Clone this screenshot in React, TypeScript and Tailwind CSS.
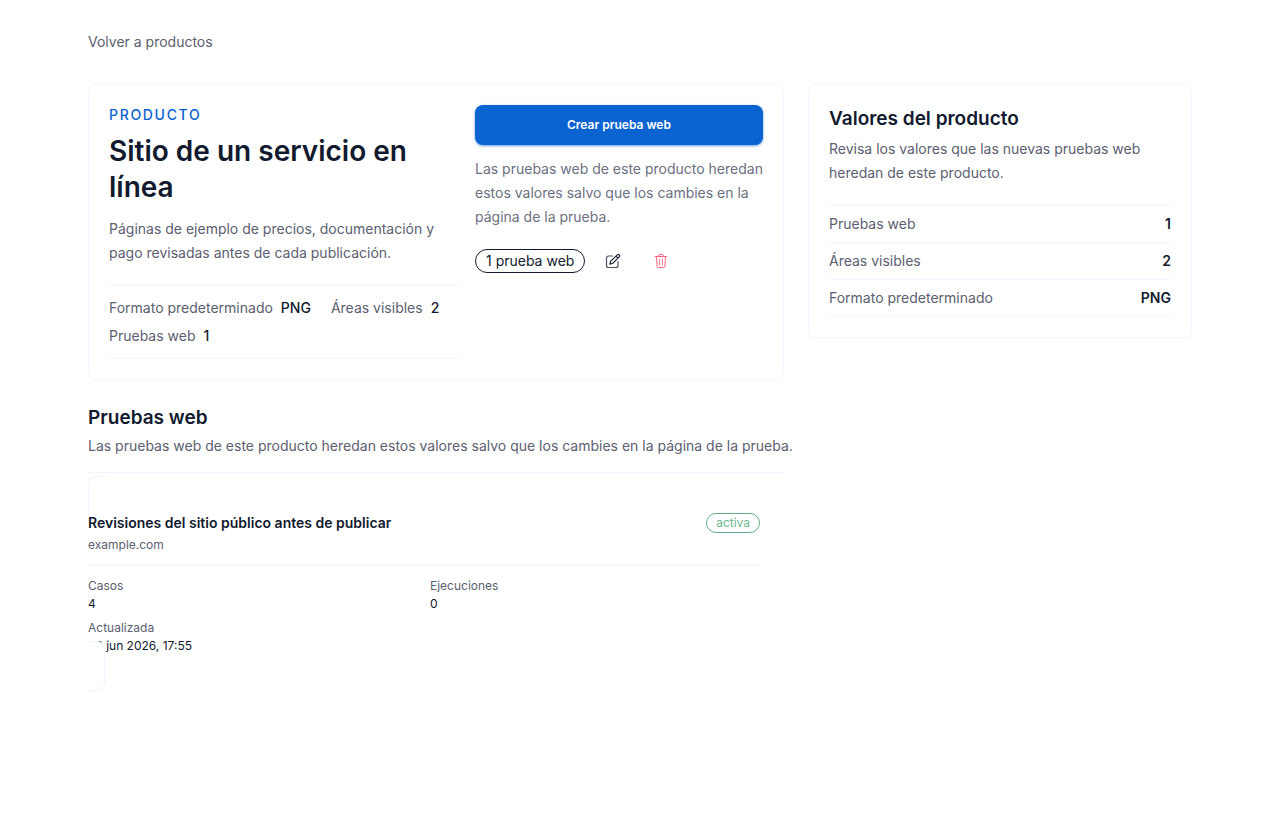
type Stat = {
    label: string;
    value: string;
};

const headerStats: Stat[] = [
    { label: "Formato predeterminado", value: "PNG" },
    { label: "Áreas visibles", value: "2" },
    { label: "Pruebas web", value: "1" },
];

const defaults: Stat[] = [
    { label: "Pruebas web", value: "1" },
    { label: "Áreas visibles", value: "2" },
    { label: "Formato predeterminado", value: "PNG" },
];

const testStats: Stat[] = [
    { label: "Casos", value: "4" },
    { label: "Ejecuciones", value: "0" },
    { label: "Actualizada", value: "26 jun 2026, 17:55" },
];

function EditIcon() {
    return (
        <svg viewBox="0 0 16 16" className="size-4" fill="none" stroke="currentColor" strokeLinecap="round" strokeLinejoin="round">
            <path opacity="0.75" strokeWidth="1.2" d="M7.5 3H3.5A2 2 0 0 0 1.5 5v7.5a2 2 0 0 0 2 2H11a2 2 0 0 0 2-2V8.5" />
            <path strokeWidth="1.1" d="M12.3 1.9a1.3 1.3 0 0 1 1.9 1.9L7.8 10.3l-3 .9.9-3zM11 3.2l1.9 1.9" />
        </svg>
    );
}

function TrashIcon() {
    return (
        <svg viewBox="0 0 16 16" className="size-4" fill="none" stroke="currentColor" strokeLinecap="round" strokeLinejoin="round">
            <path d="M2.3 3.5h11.4M5.2 3.5l.7-1.6a.8.8 0 0 1 .7-.4h2.8a.8.8 0 0 1 .7.4l.7 1.6M3.5 3.5l.6 9.6a1.5 1.5 0 0 0 1.5 1.4h4.8a1.5 1.5 0 0 0 1.5-1.4l.6-9.6" />
            <path opacity="0.8" d="M6.5 6v6M9.5 6v6" />
        </svg>
    );
}

function ProductHeader() {
    return (
        <section className="flex flex-col gap-4 rounded-lg border border-[#f1f5ff] p-5 md:flex-row">
            <div className="min-w-0 flex-1">
                <p className="text-sm font-medium uppercase tracking-[0.12em] text-[#0b63d1]">Producto</p>
                <h1 className="mt-2 text-[28px] font-semibold leading-9">Sitio de un servicio en línea</h1>
                <p className="mt-3 text-sm leading-6 text-[#5b6070]">
                    Páginas de ejemplo de precios, documentación y pago revisadas antes de cada publicación.
                </p>
                <dl className="mt-5 flex flex-wrap gap-x-5 gap-y-2 border-y border-[#f1f5ff] py-3 text-sm">
                    {headerStats.map((stat) => (
                        <div key={stat.label} className="flex gap-2">
                            <dt className="text-[#5b6070]">{stat.label}</dt>
                            <dd className="font-medium">{stat.value}</dd>
                        </div>
                    ))}
                </dl>
            </div>

            <div className="flex flex-col gap-3 md:w-72">
                <button className="h-10 rounded-lg bg-[#0b63d1] text-xs font-semibold text-white shadow-sm shadow-[#0b63d1]/50">
                    Crear prueba web
                </button>
                <p className="text-sm leading-6 text-[#6b7080]">
                    Las pruebas web de este producto heredan estos valores salvo que los cambies en la página de la prueba.
                </p>
                <div className="flex items-center gap-2">
                    <span className="flex h-6 items-center rounded-full border border-[#111a2e] px-2.5 text-sm">1 prueba web</span>
                    <button aria-label="Editar" className="flex size-10 items-center justify-center">
                        <EditIcon />
                    </button>
                    <button aria-label="Eliminar" className="flex size-10 items-center justify-center text-[#ff637d]">
                        <TrashIcon />
                    </button>
                </div>
            </div>
        </section>
    );
}

function WebTests() {
    return (
        <section>
            <h2 className="text-[19px] font-semibold leading-7">Pruebas web</h2>
            <p className="mt-1 text-sm text-[#5b6070] lg:whitespace-nowrap">
                Las pruebas web de este producto heredan estos valores salvo que los cambies en la página de la prueba.
            </p>
            <div className="mt-4 border-t border-[#f1f5ff] pt-[3px]">
                <article className="relative py-[37px] pr-6">
                    <div className="absolute left-0 top-0 h-10 w-[17px] rounded-tl-lg border-l border-t border-[#f1f5ff]" />
                    <div className="relative flex items-start justify-between">
                        <div>
                            <h3 className="text-sm font-semibold">Revisiones del sitio público antes de publicar</h3>
                            <p className="mt-1 text-xs text-[#5b6070]">example.com</p>
                        </div>
                        <span className="flex h-5 items-center rounded-full border border-[#5fae86] px-[9px] text-xs text-[#6fb892]">
                            activa
                        </span>
                    </div>
                    <dl className="mt-3 grid grid-cols-2 gap-x-3 gap-y-2 border-t border-[#f1f5ff] pt-3 text-xs">
                        {testStats.map((stat) => (
                            <div key={stat.label}>
                                <dt className="text-[#5b6070]">{stat.label}</dt>
                                <dd className="mt-0.5">{stat.value}</dd>
                            </div>
                        ))}
                    </dl>
                    <div className="absolute bottom-0 left-0 h-[50px] w-[17px] rounded-r-lg border-y border-r border-[#f1f5ff] bg-white" />
                </article>
            </div>
        </section>
    );
}

function DefaultsCard() {
    return (
        <aside className="rounded-lg border border-[#f1f5ff] p-5">
            <h2 className="text-[19px] font-semibold leading-7">Valores del producto</h2>
            <p className="mt-1 text-sm leading-6 text-[#5b6070]">
                Revisa los valores que las nuevas pruebas web heredan de este producto.
            </p>
            <dl className="mt-5 border-t border-[#f1f5ff] text-sm">
                {defaults.map((stat) => (
                    <div key={stat.label} className="flex justify-between border-b border-[#f1f5ff] py-2">
                        <dt className="text-[#5b6070]">{stat.label}</dt>
                        <dd className="font-semibold">{stat.value}</dd>
                    </div>
                ))}
            </dl>
        </aside>
    );
}

export default function App() {
    return (
        <main className="mx-auto flex min-h-screen max-w-6xl flex-col gap-8 px-6 py-8 font-['Inter',sans-serif] text-[#111a2e]">
            <a href="#" className="self-start text-sm text-[#5b6070]">
                Volver a productos
            </a>
            <div className="grid items-start gap-6 lg:grid-cols-[minmax(0,1fr)_384px]">
                <div className="flex flex-col gap-6">
                    <ProductHeader />
                    <WebTests />
                </div>
                <DefaultsCard />
            </div>
        </main>
    );
}
